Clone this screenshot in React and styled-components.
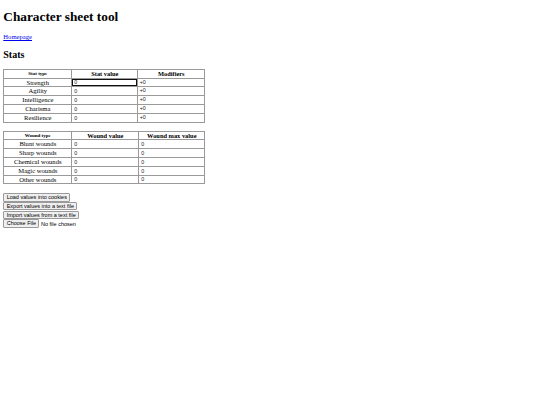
import React from 'react'
import styled, { createGlobalStyle } from 'styled-components'

const GlobalStyle = createGlobalStyle`
  html, body {
    margin: 0;
    background: #fff;
  }
  body {
    font-family: "Liberation Serif", "Times New Roman", serif;
    color: #000;
  }
`

const Page = styled.div`
  padding: 0 3.3px;
`

const Title = styled.h1`
  font-size: 13.3px;
  line-height: 15.3px;
  font-weight: bold;
  margin: 8.9px 0;
`

const Link = styled.a`
  display: block;
  font-size: 6.64px;
  line-height: 7.6px;
  color: #0000ee;
  text-decoration: underline;
  margin: 0;
`

const Section = styled.h2`
  font-size: 10px;
  line-height: 11.5px;
  font-weight: bold;
  margin: 8.3px 0;
`

const Table = styled.table`
  border-collapse: collapse;
  table-layout: fixed;
  width: 202px;
  border: 1px solid #6e6e6e;
  margin-bottom: ${p => p.$gap || 0}px;
`

const HeadCell = styled.th`
  border: 1px solid #9a9a9a;
  height: 7.8px;
  padding: 0;
  font-size: ${p => (p.$small ? '5px' : '6.4px')};
  line-height: 7px;
  font-weight: bold;
  text-align: center;
  vertical-align: middle;
`

const LabelCell = styled.td`
  border: 1px solid #9a9a9a;
  height: 7.8px;
  padding: 0;
  font-size: 6.6px;
  line-height: 7.6px;
  text-align: center;
`

const ValueCell = styled.td`
  border: 1px solid #9a9a9a;
  height: 7.8px;
  padding: 0;
  font-family: "Liberation Sans", Arial, sans-serif;
  font-size: 5.3px;
  line-height: 7.6px;
`

const Field = styled.input`
  box-sizing: border-box;
  display: block;
  width: 100%;
  height: 7.8px;
  margin: 0;
  padding: 0 0 0 1px;
  border: 0.6px solid ${p => (p.$focused ? '#111' : 'transparent')};
  font-family: "Liberation Sans", Arial, sans-serif;
  font-size: 5.3px;
  color: #222;
  background: #fff;
  outline: none;
`

const Static = styled.span`
  padding-left: 1.4px;
  color: #222;
`

const Controls = styled.div`
  display: flex;
  flex-direction: column;
  align-items: flex-start;
  gap: 0.3px;
  margin-top: 9px;
`

const Button = styled.button`
  font-family: "Liberation Sans", Arial, sans-serif;
  font-size: 5.5px;
  line-height: 6.4px;
  height: 8.4px;
  padding: 0 2.4px;
  margin: 0;
  background: #efefef;
  border: 0.6px solid #9a9a9a;
  border-radius: 1px;
  color: #000;
`

const FileRow = styled.div`
  display: flex;
  align-items: center;
  gap: 1.6px;
  font-family: "Liberation Sans", Arial, sans-serif;
  font-size: 5.5px;
`

const stats = ['Strength', 'Agility', 'Intelligence', 'Charisma', 'Resilience']
const wounds = ['Blunt wounds', 'Sharp wounds', 'Chemical wounds', 'Magic wounds', 'Other wounds']

export default function App() {
  return (
    <>
      <GlobalStyle />
      <Page>
        <Title>Character sheet tool</Title>
        <Link href="#">Homepage</Link>
        <Section>Stats</Section>

        <Table $gap={8}>
          <colgroup>
            <col style={{ width: '68px' }} />
            <col style={{ width: '66px' }} />
            <col style={{ width: '67px' }} />
          </colgroup>
          <thead>
            <tr>
              <HeadCell $small>Stat type</HeadCell>
              <HeadCell>Stat value</HeadCell>
              <HeadCell>Modifiers</HeadCell>
            </tr>
          </thead>
          <tbody>
            {stats.map((name, i) => (
              <tr key={name}>
                <LabelCell>{name}</LabelCell>
                <ValueCell>
                  <Field defaultValue="0" $focused={i === 0} />
                </ValueCell>
                <ValueCell>
                  <Static>+0</Static>
                </ValueCell>
              </tr>
            ))}
          </tbody>
        </Table>

        <Table>
          <colgroup>
            <col style={{ width: '68px' }} />
            <col style={{ width: '67px' }} />
            <col style={{ width: '66px' }} />
          </colgroup>
          <thead>
            <tr>
              <HeadCell $small>Wound type</HeadCell>
              <HeadCell>Wound value</HeadCell>
              <HeadCell>Wound max value</HeadCell>
            </tr>
          </thead>
          <tbody>
            {wounds.map(name => (
              <tr key={name}>
                <LabelCell>{name}</LabelCell>
                <ValueCell>
                  <Field defaultValue="0" />
                </ValueCell>
                <ValueCell>
                  <Field defaultValue="0" />
                </ValueCell>
              </tr>
            ))}
          </tbody>
        </Table>

        <Controls>
          <Button>Load values into cookies</Button>
          <Button>Export values into a text file</Button>
          <Button>Import values from a text file</Button>
          <FileRow>
            <Button>Choose File</Button>
            <span>No file chosen</span>
          </FileRow>
        </Controls>
      </Page>
    </>
  )
}
